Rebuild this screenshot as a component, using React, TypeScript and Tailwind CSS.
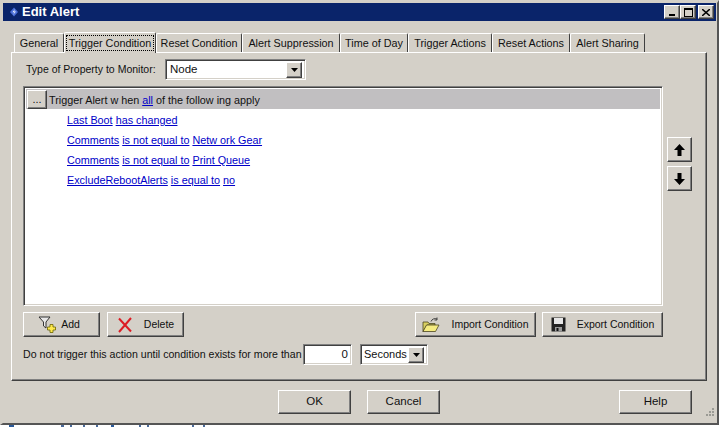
import React from 'react';

const raised = 'border border-t-white border-l-white border-r-[#404040] border-b-[#404040] shadow-[inset_-1px_-1px_0_#808080] bg-[#d4d0c8]';
const sunken = 'border border-t-[#808080] border-l-[#808080] border-r-white border-b-white shadow-[inset_1px_1px_0_#404040,inset_-1px_-1px_0_#d4d0c8] bg-white';

const tabs = [
  { label: 'General', w: 'w-[50px]' },
  { label: 'Trigger Condition', w: 'w-[92px]', active: true },
  { label: 'Reset Condition', w: 'w-[86px]' },
  { label: 'Alert Suppression', w: 'w-[98px]' },
  { label: 'Time of Day', w: 'w-[68px]' },
  { label: 'Trigger Actions', w: 'w-[84px]' },
  { label: 'Reset Actions', w: 'w-[78px]' },
  { label: 'Alert Sharing', w: 'w-[75px]' },
];

const rows = [
  ['Last Boot', 'has changed'],
  ['Comments', 'is not equal to', 'Network Gear'],
  ['Comments', 'is not equal to', 'Print Queue'],
  ['ExcludeRebootAlerts', 'is equal to', 'no'],
];

const ComboArrow = () => (
  <span className={`${raised} w-[16px] h-[16px] flex items-center justify-center shrink-0`}>
    <svg width="7" height="4" viewBox="0 0 7 4"><path d="M0 0h7L3.5 4z" fill="#000" /></svg>
  </span>
);

const Caption = ({ children }: { children: React.ReactNode }) => (
  <span className={`${raised} w-[16px] h-[14px] flex items-center justify-center`}>{children}</span>
);

const Btn = ({ w, h = 'h-[25px]', children }: { w: string; h?: string; children: React.ReactNode }) => (
  <button className={`${raised} ${w} ${h} flex items-center justify-center text-[#111] shrink-0 whitespace-nowrap`}>{children}</button>
);

const FilterAdd = () => (
  <svg width="18" height="18" viewBox="0 0 18 18">
    <path d="M1 1h11L8 6v6L5.500 10V6z" fill="#e8e8e8" stroke="#333" />
    <path d="M9.500 11h2.500V8.500h3V11H17.500v3H15v2.500h-3V14H9.500z" fill="#ffe94d" stroke="#6b6400" strokeWidth=".8" />
  </svg>
);

const RedX = () => (
  <svg width="16" height="16" viewBox="0 0 16 16">
    <path d="M2 1.500 14 14.500M14 1 2 15" stroke="#dc1c24" strokeWidth="2" />
  </svg>
);

const Folder = () => (
  <svg width="18" height="16" viewBox="0 0 18 16">
    <path d="M1 5h5l1 1.500h6V8H5L1 14.500z" fill="#d8cf62" stroke="#4a4520" strokeWidth=".8" />
    <path d="M4.500 8h12.500l-3.500 6.500H1z" fill="#f5ec80" stroke="#4a4520" strokeWidth=".8" />
    <path d="M9 4.500c1-2.500 3.500-3.500 6-2.500M15 .5V3h-2.500" fill="none" stroke="#333" strokeWidth=".9" />
  </svg>
);

const Floppy = () => (
  <svg width="15" height="15" viewBox="0 0 15 15">
    <path d="M.5.500h14v14H.5z" fill="#222" />
    <path d="M3 1h9v6H3z" fill="#e6e6e6" />
    <path d="M4 10h7v4.500H4z" fill="#9a9a9a" />
    <path d="M5.500 11h2v3h-2z" fill="#111" />
  </svg>
);

const Arrow = ({ down }: { down?: boolean }) => (
  <svg width="11" height="12" viewBox="0 0 11 12" className={down ? 'rotate-180' : ''}>
    <path d="M5.500 0 11 6H7.500v6h-4V6H0z" fill="#000" />
  </svg>
);

const TabStrip = () => (
  <div className="flex items-end h-[21px] pl-[3px] relative z-10 text-[10.8px]">
    {tabs.map((t) => (
      <div
        key={t.label}
        className={`${t.w} shrink-0 flex items-center justify-center whitespace-nowrap border-t border-l border-r border-t-white border-l-white border-r-[#404040] rounded-t-[2px] bg-[#d4d0c8] ${
          t.active ? 'h-[21px] -mb-px' : 'h-[19px]'
        }`}
      >
        {t.active ? (
          <span className="w-[88px] h-[16px] text-center border border-dotted border-black leading-[14px]">{t.label}</span>
        ) : (
          <span className="leading-[14px]">{t.label}</span>
        )}
      </div>
    ))}
  </div>
);

const ConditionBox = () => (
  <div className={`${sunken} h-[220px] mt-[6px] mr-[43px] pt-[2px] pl-[2px] pr-[2px] text-[10.8px]`}>
    <div className="h-[20px] bg-[#c1bfc1] flex items-center pl-[1px]">
      <button className={`${raised} w-[20px] h-[19px] flex items-start justify-center leading-[16px] shrink-0`}>...</button>
      <span className="ml-[2px] mt-[2px] text-[#111]">
        Trigger Alert w hen <a className="text-[#0000c8] underline">all</a> of the follow ing apply
      </span>
    </div>
    <div className="pt-[1px] pl-[41px]">
      {rows.map((r, i) => (
        <div key={i} className="h-[20px] flex items-center gap-[3px]">
          {r.map((part, j) => (
            <a key={j} className="text-[#0000c8] underline decoration-[#0000c8] whitespace-pre">
              {part === 'Network Gear' ? 'Netw ork Gear' : part}
            </a>
          ))}
        </div>
      ))}
    </div>
  </div>
);

export default function App() {
  return (
    <div className="w-[719px] h-[427px] bg-white overflow-hidden font-['Liberation_Sans',Arial,sans-serif] text-[10.5px] text-[#111]">
      <div className="h-[425px] bg-[#d4d0c8] border-r-2 border-b-2 border-r-[#555] border-b-[#555] border-t-[3px] border-l-[3px] border-t-[#d4d0c8] border-l-[#d4d0c8] flex flex-col">
        <div className="h-[18px] mr-px bg-[#0a246a] flex items-center pl-[7px] pr-[2px] shrink-0">
          <svg width="8" height="10" viewBox="0 0 8 10" className="shrink-0">
            <path d="M4 .500 8 5 4 9.500 0 5z" fill="#4a6fd8" />
            <path d="M5 2 2.500 5.200h2L3 8l3-3.500H4z" fill="#fff" />
          </svg>
          <span className="ml-[4px] text-white font-bold text-[13px]">Edit Alert</span>
          <div className="ml-auto flex">
            <Caption><span className="w-[6px] h-[2px] bg-black mt-[6px]" /></Caption>
            <Caption><span className="w-[9px] h-[9px] border border-black border-t-2" /></Caption>
            <span className="ml-[2px]">
              <Caption>
                <svg width="8" height="7" viewBox="0 0 8 7"><path d="M0 0 8 7M8 0 0 7" stroke="#000" strokeWidth="1.500" /></svg>
              </Caption>
            </span>
          </div>
        </div>

        <div className="pt-[10px] pl-[8px] pr-[10px]">
          <TabStrip />
          <div className="h-[329px] border border-t-white border-l-white border-r-[#404040] border-b-[#404040] shadow-[inset_-1px_-1px_0_#808080] pl-[11px] pt-[6px]">
            <div className="flex items-center h-[21px] pl-[3px]">
              <span className="w-[139px] shrink-0">Type of Property to Monitor:</span>
              <div className={`${sunken} w-[141px] h-[21px] flex items-center justify-between pl-[4px] pr-[3px] text-[11.5px]`}>
                Node <ComboArrow />
              </div>
            </div>

            <div className="relative">
              <ConditionBox />
              <div className="absolute right-[14px] top-[51px] flex flex-col gap-[4px]">
                <Btn w="w-[25px]"><Arrow /></Btn>
                <Btn w="w-[25px]"><Arrow down /></Btn>
              </div>
            </div>

            <div className="flex mt-[6px] mr-[43px]">
              <Btn w="w-[77px] pr-[5px]"><span className="mr-[5px]"><FilterAdd /></span>Add</Btn>
              <div className="w-[7px]" />
              <Btn w="w-[77px]"><span className="mr-[11px]"><RedX /></span>Delete</Btn>
              <div className="ml-auto flex gap-[6px]">
                <Btn w="w-[121px]"><span className="mr-[11px]"><Folder /></span>Import Condition</Btn>
                <Btn w="w-[121px]"><span className="mr-[11px]"><Floppy /></span>Export Condition</Btn>
              </div>
            </div>

            <div className="flex items-center h-[21px] mt-[7px]">
              <span className="w-[280px] shrink-0 whitespace-nowrap text-[10.6px]">Do not trigger this action until condition exists for more than</span>
              <div className={`${sunken} w-[49px] h-[21px] flex items-center justify-end pr-[3px] text-[11.5px]`}>0</div>
              <div className={`${sunken} w-[68px] h-[21px] ml-[8px] flex items-center justify-between pl-[3px] pr-[3px] text-[11px]`}>
                Seconds <ComboArrow />
              </div>
            </div>
          </div>
        </div>

        <div className="relative flex pt-[9px] pl-[275px] pr-[25px] text-[11.5px]">
          <Btn w="w-[73px]" h="h-[24px]">OK</Btn>
          <div className="w-[16px]" />
          <Btn w="w-[73px]" h="h-[24px]">Cancel</Btn>
          <div className="ml-auto"><Btn w="w-[73px]" h="h-[24px]">Help</Btn></div>
          <svg width="10" height="10" viewBox="0 0 10 10" className="absolute right-[2px] top-[26px]">
            <path d="M7 1h2v2H7zM4 4h2v2H4zM7 4h2v2H7zM1 7h2v2H1zM4 7h2v2H4zM7 7h2v2H7z" fill="#9a9a94" />
          </svg>
        </div>
      </div>
      <div className="h-[2px] flex pl-[9px] gap-[3px]">
        <span className="w-[5px] bg-[#2a5a9a]" />
        <span className="w-[3px] ml-[44px] bg-[#4a6a9a]" />
        <span className="w-[2px] ml-[3px] bg-[#4a6a9a]" />
        <span className="w-[2px] ml-[8px] bg-[#4a6a9a]" />
        <span className="w-[2px] ml-[8px] bg-[#4a6a9a]" />
        <span className="w-[3px] ml-[10px] bg-[#2a5a9a]" />
        <span className="w-[2px] ml-[22px] bg-[#4a6a9a]" />
        <span className="w-[2px] ml-[3px] bg-[#4a6a9a]" />
        <span className="w-[2px] ml-[40px] bg-[#4a6a9a]" />
        <span className="w-[2px] ml-[6px] bg-[#4a6a9a]" />
      </div>
    </div>
  );
}
